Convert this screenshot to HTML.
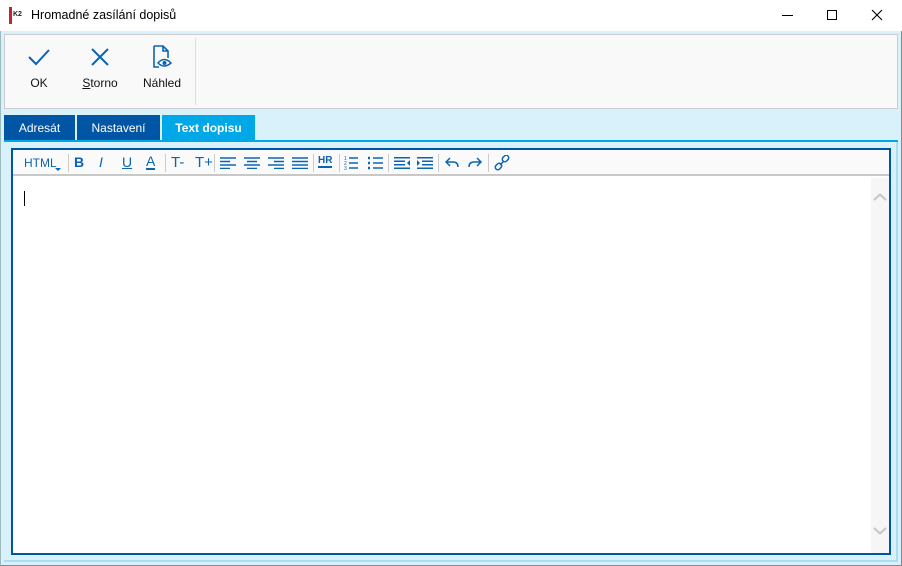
<!DOCTYPE html>
<html><head><meta charset="utf-8"><style>
*{margin:0;padding:0;box-sizing:border-box}
body{width:902px;height:566px;overflow:hidden;font-family:"Liberation Sans",sans-serif;background:#fff;position:relative}
.abs{position:absolute}
.title{left:0;top:0;width:902px;height:31px;background:#fff}
.main{left:0;top:31px;width:902px;height:535px;background:#d9f1fb;border-left:1px solid #9bb;border-right:1px solid #888;border-bottom:1px solid #888}
.tb{left:4px;top:34px;width:894px;height:75px;background:#f9f9f9;border:1px solid #ccc}
.btn{top:0;width:60px;text-align:center;font-size:12px;color:#111}
.tab{top:115px;height:26px;color:#fff;font-size:12px;text-align:center;line-height:26px}
.ed{left:11px;top:148px;width:880px;height:407px;border:2px solid #0056a4;background:#fff}
.etb{left:0;top:0;width:876px;height:26px;background:#fafafa;border-bottom:2px solid #c8c8c8}
.sep{top:4px;width:1px;height:18px;background:#ccc}
</style></head><body>
<div class="abs title">
 <div class="abs" style="left:9px;top:7px;width:17px;height:17px;background:#fff;border-left:3px solid #c0272d;">
  <div style="font-size:7px;font-weight:bold;margin:4px 0 0 1px;color:#222">K2</div></div>
 <div class="abs" style="left:31px;top:8px;font-size:12.5px;color:#000">Hromadné zasílání dopisů</div>
 <div class="abs" style="left:782px;top:15px;width:11px;height:1px;background:#000"></div>
 <div class="abs" style="left:827px;top:10px;width:10px;height:10px;border:1px solid #000"></div>
 <svg class="abs" style="left:871px;top:9px" width="12" height="12"><path d="M1 1L11 11M11 1L1 11" stroke="#000" stroke-width="1.1"/></svg>
</div>
<div class="abs main"></div>
<div class="abs tb">
 <div class="abs btn" style="left:4px">
  <svg style="margin-top:12px" width="24" height="20"><path d="M2 10L9 17L22 3" stroke="#0a64b4" stroke-width="2" fill="none"/></svg>
  <div style="margin-top:6px">OK</div></div>
 <div class="abs btn" style="left:65px">
  <svg style="margin-top:11px" width="22" height="22"><path d="M3 3L19 19M19 3L3 19" stroke="#0a64b4" stroke-width="2"/></svg>
  <div style="margin-top:5px"><u>S</u>torno</div></div>
 <div class="abs btn" style="left:127px">
  <svg style="margin-top:10px" width="24" height="24"><path d="M4 1H13L18 6V13M4 1V22H9M13 1V6H18" stroke="#0a64b4" stroke-width="1.6" fill="none"/><path d="M8 18Q14 11 21 18Q14 24 8 18Z" stroke="#0a64b4" stroke-width="1.5" fill="#fff"/><circle cx="14.5" cy="18" r="2" fill="#0a64b4"/></svg>
  <div style="margin-top:4px">Náhled</div></div>
 <div class="abs" style="left:190px;top:3px;width:1px;height:67px;background:#ddd"></div>
</div>
<div class="abs tab" style="left:4px;width:71px;background:#0056a4">Adresát</div>
<div class="abs tab" style="left:77px;width:83px;background:#0056a4">Nastavení</div>
<div class="abs tab" style="left:162px;width:93px;background:#00a8e8;font-weight:bold">Text dopisu</div>
<div class="abs" style="left:4px;top:140px;width:894px;height:2px;background:#00a8e8"></div>
<div class="abs" style="left:896px;top:142px;width:2px;height:420px;background:#a9def5"></div>
<div class="abs" style="left:4px;top:560px;width:894px;height:2px;background:#a9def5"></div>
<div class="abs ed">
 <div class="abs etb">
  <div class="abs" style="left:11px;top:6px;font-size:12px;color:#0a64b4">HTML</div>
  <svg class="abs" style="left:42px;top:18px" width="6" height="4"><path d="M0 0H6L3 3Z" fill="#0a64b4"/></svg>
  <div class="abs sep" style="left:55px"></div>
  <div class="abs" style="left:61px;top:4px;font:bold 14px 'Liberation Sans';color:#0a64b4">B</div>
  <div class="abs" style="left:86px;top:4px;font:italic 14px 'Liberation Sans';color:#0a64b4">I</div>
  <div class="abs" style="left:109px;top:4px;font:14px 'Liberation Sans';color:#0a64b4;text-decoration:underline">U</div>
  <div class="abs" style="left:133px;top:4px;font:14px 'Liberation Sans';color:#0a64b4;border-bottom:2px solid #0a64b4;line-height:14px">A</div>
  <div class="abs sep" style="left:152px"></div>
  <div class="abs" style="left:158px;top:4px;font:15px 'Liberation Sans';color:#0a64b4">T-</div>
  <div class="abs" style="left:182px;top:4px;font:15px 'Liberation Sans';color:#0a64b4">T+</div>
  <div class="abs sep" style="left:201px"></div>
  <svg class="abs" style="left:206px;top:7px" width="90" height="12" stroke="#0a64b4" stroke-width="1.5">
   <path d="M1 1H17M1 4.5H11M1 8H17M1 11.5H11"/>
   <path d="M25 1H41M28 4.5H38M25 8H41M28 11.5H38"/>
   <path d="M49 1H65M55 4.5H65M49 8H65M55 11.5H65"/>
   <path d="M73 1H89M73 4.5H89M73 8H89M73 11.5H89"/>
  </svg>
  <div class="abs sep" style="left:300px"></div>
  <div class="abs" style="left:305px;top:6px;font:bold 10px 'Liberation Sans';color:#0a64b4;border-bottom:2px solid #0a64b4;line-height:10px">HR</div>
  <div class="abs sep" style="left:326px"></div>
  <svg class="abs" style="left:331px;top:5px" width="42" height="16" stroke="#0a64b4" stroke-width="1.5">
   <path d="M5 3H14M5 8H14M5 13H14"/>
   <text x="0" y="5" font-size="5" fill="#0a64b4" stroke="none">1</text><text x="0" y="10" font-size="5" fill="#0a64b4" stroke="none">2</text><text x="0" y="15" font-size="5" fill="#0a64b4" stroke="none">3</text>
   <path d="M24 3H26M24 8H26M24 13H26" stroke-width="2.5"/><path d="M29 3H39M29 8H39M29 13H39"/>
  </svg>
  <div class="abs sep" style="left:375px"></div>
  <svg class="abs" style="left:381px;top:7px" width="42" height="12" fill="#0a64b4">
   <path d="M0 0H16V1.5H0ZM0 3.5H11V5H0ZM0 7H11V8.5H0ZM0 10.5H16V12H0ZM16 3L13 6L16 9Z"/>
   <path d="M23 0H39V1.5H23ZM28 3.5H39V5H28ZM28 7H39V8.5H28ZM23 10.5H39V12H23ZM23 3L26 6L23 9Z"/>
  </svg>
  <div class="abs sep" style="left:425px"></div>
  <svg class="abs" style="left:432px;top:6px" width="40" height="14" fill="none" stroke="#0a64b4" stroke-width="1.5">
   <path d="M5 2L1 6L5 10M1 6H8Q13 6 13 11"/>
   <path d="M32 2L36 6L32 10M36 6H29Q24 6 24 11"/>
  </svg>
  <div class="abs sep" style="left:475px"></div>
  <svg class="abs" style="left:481px;top:5px" width="16" height="16" fill="none" stroke="#0a64b4" stroke-width="1.5">
   <rect x="8" y="1" width="7" height="5" rx="2.5" transform="rotate(-45 11.5 3.5)"/>
   <rect x="1" y="9" width="7" height="5" rx="2.5" transform="rotate(-45 4.5 11.5)"/>
   <path d="M6 10L10 6"/>
  </svg>
 </div>
 <div class="abs" style="left:11px;top:41px;width:1px;height:15px;background:#000"></div>
 <div class="abs" style="left:858px;top:28px;width:18px;height:375px;background:#f6f6f6">
  <svg class="abs" style="left:2px;top:15px" width="14" height="9"><path d="M1 7L7 1.5L13 7" stroke="#c6c6c6" stroke-width="2" fill="none"/></svg>
  <svg class="abs" style="left:2px;top:348px" width="14" height="9"><path d="M1 2L7 7.5L13 2" stroke="#c6c6c6" stroke-width="2" fill="none"/></svg>
 </div>
</div>
</body></html>
